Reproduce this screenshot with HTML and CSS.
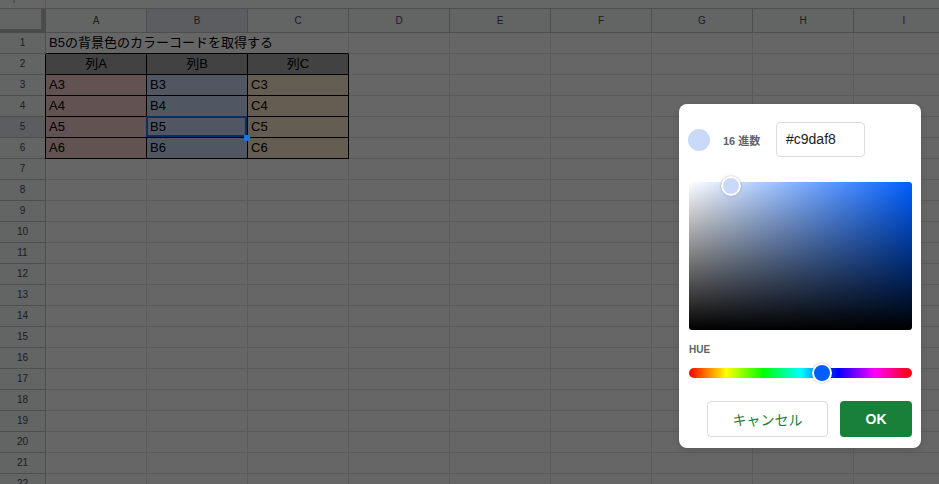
FILE: index.html
```html
<!DOCTYPE html>
<html lang="ja">
<head>
<meta charset="utf-8">
<title>カラーコード</title>
<link rel="stylesheet" href="styles.css">
</head>
<body>
<div class="app">
  <div class="fbar"><div class="fx">fx</div><div class="fin"></div></div>
  <div class="sheet">
    <div class="corner"></div>
    <div class="ch">A</div><div class="ch sel">B</div><div class="ch">C</div><div class="ch">D</div><div class="ch">E</div><div class="ch">F</div><div class="ch">G</div><div class="ch">H</div><div class="ch">I</div>

    <div class="rh">1</div><div class="c title">B5の背景色のカラーコードを取得する</div><div class="c"></div><div class="c"></div><div class="c"></div><div class="c"></div><div class="c"></div><div class="c"></div>

    <div class="rh">2</div><div class="c t th first">列A</div><div class="c t th">列B</div><div class="c t th">列C</div><div class="c"></div><div class="c"></div><div class="c"></div><div class="c"></div><div class="c"></div><div class="c"></div>

    <div class="rh">3</div><div class="c t ca first">A3</div><div class="c t cb">B3</div><div class="c t cc">C3</div><div class="c"></div><div class="c"></div><div class="c"></div><div class="c"></div><div class="c"></div><div class="c"></div>

    <div class="rh">4</div><div class="c t ca first">A4</div><div class="c t cb">B4</div><div class="c t cc">C4</div><div class="c"></div><div class="c"></div><div class="c"></div><div class="c"></div><div class="c"></div><div class="c"></div>

    <div class="rh sel">5</div><div class="c t ca first">A5</div><div class="c t cb active">B5</div><div class="c t cc">C5</div><div class="c"></div><div class="c"></div><div class="c"></div><div class="c"></div><div class="c"></div><div class="c"></div>

    <div class="rh">6</div><div class="c t ca first">A6</div><div class="c t cb">B6</div><div class="c t cc">C6</div><div class="c"></div><div class="c"></div><div class="c"></div><div class="c"></div><div class="c"></div><div class="c"></div>

    <div class="rh">7</div><div class="c"></div><div class="c"></div><div class="c"></div><div class="c"></div><div class="c"></div><div class="c"></div><div class="c"></div><div class="c"></div><div class="c"></div>
    <div class="rh">8</div><div class="c"></div><div class="c"></div><div class="c"></div><div class="c"></div><div class="c"></div><div class="c"></div><div class="c"></div><div class="c"></div><div class="c"></div>
    <div class="rh">9</div><div class="c"></div><div class="c"></div><div class="c"></div><div class="c"></div><div class="c"></div><div class="c"></div><div class="c"></div><div class="c"></div><div class="c"></div>
    <div class="rh">10</div><div class="c"></div><div class="c"></div><div class="c"></div><div class="c"></div><div class="c"></div><div class="c"></div><div class="c"></div><div class="c"></div><div class="c"></div>
    <div class="rh">11</div><div class="c"></div><div class="c"></div><div class="c"></div><div class="c"></div><div class="c"></div><div class="c"></div><div class="c"></div><div class="c"></div><div class="c"></div>
    <div class="rh">12</div><div class="c"></div><div class="c"></div><div class="c"></div><div class="c"></div><div class="c"></div><div class="c"></div><div class="c"></div><div class="c"></div><div class="c"></div>
    <div class="rh">13</div><div class="c"></div><div class="c"></div><div class="c"></div><div class="c"></div><div class="c"></div><div class="c"></div><div class="c"></div><div class="c"></div><div class="c"></div>
    <div class="rh">14</div><div class="c"></div><div class="c"></div><div class="c"></div><div class="c"></div><div class="c"></div><div class="c"></div><div class="c"></div><div class="c"></div><div class="c"></div>
    <div class="rh">15</div><div class="c"></div><div class="c"></div><div class="c"></div><div class="c"></div><div class="c"></div><div class="c"></div><div class="c"></div><div class="c"></div><div class="c"></div>
    <div class="rh">16</div><div class="c"></div><div class="c"></div><div class="c"></div><div class="c"></div><div class="c"></div><div class="c"></div><div class="c"></div><div class="c"></div><div class="c"></div>
    <div class="rh">17</div><div class="c"></div><div class="c"></div><div class="c"></div><div class="c"></div><div class="c"></div><div class="c"></div><div class="c"></div><div class="c"></div><div class="c"></div>
    <div class="rh">18</div><div class="c"></div><div class="c"></div><div class="c"></div><div class="c"></div><div class="c"></div><div class="c"></div><div class="c"></div><div class="c"></div><div class="c"></div>
    <div class="rh">19</div><div class="c"></div><div class="c"></div><div class="c"></div><div class="c"></div><div class="c"></div><div class="c"></div><div class="c"></div><div class="c"></div><div class="c"></div>
    <div class="rh">20</div><div class="c"></div><div class="c"></div><div class="c"></div><div class="c"></div><div class="c"></div><div class="c"></div><div class="c"></div><div class="c"></div><div class="c"></div>
    <div class="rh">21</div><div class="c"></div><div class="c"></div><div class="c"></div><div class="c"></div><div class="c"></div><div class="c"></div><div class="c"></div><div class="c"></div><div class="c"></div>
    <div class="rh">22</div><div class="c"></div><div class="c"></div><div class="c"></div><div class="c"></div><div class="c"></div><div class="c"></div><div class="c"></div><div class="c"></div><div class="c"></div>
  </div>

  <div class="backdrop"></div>

  <div class="dialog">
    <div class="top">
      <span class="swatch"></span>
      <span class="lbl">16 進数</span>
      <div class="hex">#c9daf8</div>
    </div>
    <div class="sv"><span class="sv-thumb"></span></div>
    <div class="hue-lbl">HUE</div>
    <div class="hue"><span class="hue-thumb"></span></div>
    <div class="btns">
      <button class="cancel">キャンセル</button>
      <button class="ok">OK</button>
    </div>
  </div>
</div>
</body>
</html>
```

FILE: styles.css
```css
* { box-sizing: border-box; margin: 0; padding: 0; }
html, body { width: 939px; height: 484px; overflow: hidden; background: #fff; }
body { font-family: "Liberation Sans", "Noto Sans CJK JP", Arial, sans-serif; color: #000; }

.app { position: relative; width: 939px; height: 484px; overflow: hidden; }

.fbar { display: flex; height: 9px; border-bottom: 1px solid #c7c7c7; overflow: hidden; }
.fx { width: 46px; margin-top: -11px; padding-left: 13px; border-right: 1px solid #dadce0;
      font: italic 14px/1 "Liberation Serif", serif; color: #b0b4b8; }
.fin { flex: 1; }

.sheet { display: grid; grid-template-columns: 46px repeat(9, 101px); grid-template-rows: 24px; grid-auto-rows: 21px; }

.corner { background: #f8f9fa; border-right: 5px solid #bcbcbc; border-bottom: 4px solid #bcbcbc; }
.ch { background: #f8f9fa; border-right: 1px solid #c4c4c4; border-bottom: 1px solid #c4c4c4;
      font-size: 10px; line-height: 23px; text-align: center; color: #4a4d52; }
.rh { background: #f8f9fa; border-right: 1px solid #c4c4c4; border-bottom: 1px solid #c4c4c4;
      font-size: 10px; line-height: 20px; text-align: center; color: #4a4d52; }
.ch.sel, .rh.sel { background: #e3e8ef; }

.c { border-right: 1px solid #e2e3e3; border-bottom: 1px solid #e2e3e3; padding: 0 3px;
     font-size: 13px; line-height: 20px; white-space: nowrap; }
.title { grid-column: span 3; border-bottom-color: #000; }
.t { border-right-color: #000; border-bottom-color: #000; }
.first { margin-left: -1px; border-left: 1px solid #000; }
.th { background: #a6a6a6; text-align: center; }
.ca { background: #f4cccc; }
.cb { background: #c9daf8; }
.cc { background: #fce5cd; }

.active { position: relative; }
.active::after { content: ""; position: absolute; left: -1px; top: -1px; right: 0; bottom: 0; border: 2px solid #1a73e8; }
.active::before { content: ""; position: absolute; right: -3px; bottom: -4px; width: 6px; height: 6px; background: #1a73e8; z-index: 1; }

.backdrop { position: absolute; inset: 0; background: rgba(0, 0, 0, 0.6); }

.dialog { position: absolute; left: 679px; top: 104px; width: 242px; height: 344px; padding: 18px 9px 0 10px;
          display: flex; flex-direction: column; background: #fff; border-radius: 8px;
          box-shadow: 0 2px 6px rgba(0, 0, 0, 0.15); }
.top { display: flex; align-items: center; height: 35px; }
.swatch { width: 22px; height: 22px; margin-left: -1px; border-radius: 50%; background: #c9daf8; }
.lbl { width: 53px; margin-left: 13px; font-size: 11px; font-weight: 700; color: #5f6368; }
.hex { width: 89px; height: 35px; padding-left: 9px; border: 1px solid #dadce0; border-radius: 4px;
       font-size: 14px; line-height: 33px; color: #202124; }

.sv { position: relative; margin-top: 25px; height: 148px; border-radius: 3px;
      background: linear-gradient(to top, #000, rgba(0, 0, 0, 0)), linear-gradient(to right, #fff, rgba(255, 255, 255, 0)), #005eff; }
.sv-thumb { position: absolute; left: 42px; top: 3.5px; width: 20px; height: 20px; margin: -10px 0 0 -10px;
            border: 2px solid #fff; border-radius: 50%; background: #c9daf8; box-shadow: 0 0 2px rgba(0, 0, 0, 0.35); }

.hue-lbl { margin-top: 14px; font-size: 10px; font-weight: 700; line-height: 12px; color: #5f6368; }
.hue { position: relative; margin-top: 12px; height: 10px; border-radius: 5px;
       background: linear-gradient(to right, #f00, #ff0 16.7%, #0f0 33.3%, #0ff 50%, #00f 66.7%, #f0f 83.3%, #f00); }
.hue-thumb { position: absolute; left: 133px; top: 5px; width: 20px; height: 20px; margin: -10px 0 0 -10px;
             border: 2px solid #fff; border-radius: 50%; background: #005eff; box-shadow: 0 0 2px rgba(0, 0, 0, 0.35); }

.btns { margin-top: 23px; display: flex; justify-content: flex-end; gap: 12px; }
.cancel { width: 121px; height: 36px; border: 1px solid #dadce0; border-radius: 4px; background: #fff; color: #188038;
          font-family: "Liberation Sans", "Noto Sans CJK JP", sans-serif; font-size: 14px; font-weight: 400; }
.ok { width: 72px; height: 36px; border: 0; border-radius: 4px; background: #188038; color: #fff;
      font-family: "Liberation Sans", sans-serif; font-size: 14px; font-weight: 700; }
```
